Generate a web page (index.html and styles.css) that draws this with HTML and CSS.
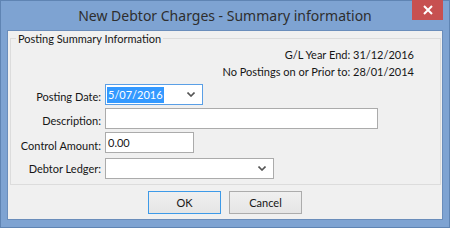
FILE: index.html
```html
<!DOCTYPE html>
<html>
<head>
<meta charset="utf-8">
<link rel="stylesheet" href="styles.css">
</head>
<body>
<div class="window">
  <div class="titlebar">
    <div class="title">New Debtor Charges - Summary information</div>
    <div class="close"><svg width="10" height="10" viewBox="0 0 10 10"><path d="M1 1L9 9M9 1L1 9" stroke="#fff" stroke-width="2" fill="none"/></svg></div>
  </div>
  <div class="client">
    <fieldset class="group">
      <legend class="legend">Posting Summary Information</legend>
      <div class="info">G/L Year End: 31/12/2016</div>
      <div class="info">No Postings on or Prior to: 28/01/2014</div>
      <div class="form">
        <label class="label">Posting Date:</label>
        <div class="field combo focus w-date"><span class="sel">5/07/2016</span><svg class="chev" width="8" height="5" viewBox="0 0 8 5"><path d="M0.5 0.5L4 4L7.5 0.5" stroke="#555" stroke-width="1.6" fill="none"/></svg></div>
        <label class="label">Description:</label>
        <div class="field w-desc"></div>
        <label class="label">Control Amount:</label>
        <div class="field w-ctrl">0.00</div>
        <label class="label">Debtor Ledger:</label>
        <div class="field combo w-ledger"><span></span><svg class="chev" width="8" height="5" viewBox="0 0 8 5"><path d="M0.5 0.5L4 4L7.5 0.5" stroke="#555" stroke-width="1.6" fill="none"/></svg></div>
      </div>
    </fieldset>
    <div class="buttons">
      <button class="btn default">OK</button>
      <button class="btn">Cancel</button>
    </div>
  </div>
</div>
</body>
</html>
```
FILE: styles.css
```css
html, body {
  margin: 0;
  padding: 0;
}
body {
  width: 450px;
  height: 228px;
  overflow: hidden;
  font-family: Lato, "Noto Sans", sans-serif;
  font-size: 11px;
  color: #161616;
}
.window {
  box-sizing: border-box;
  width: 450px;
  height: 228px;
  border: 1px solid #5f84b3;
  background: #7ea3d2;
  padding: 0 6px 7px 6px;
  display: flex;
  flex-direction: column;
  position: relative;
}
.titlebar {
  height: 29px;
  display: flex;
  align-items: center;
  justify-content: center;
}
.title {
  font-family: "Noto Sans", sans-serif;
  font-size: 14px;
  color: #2e2e2e;
  margin-top: 0px;
}
.close {
  position: absolute;
  top: -1px;
  right: 6px;
  width: 31px;
  height: 20px;
  background: #c75050;
  display: flex;
  align-items: center;
  justify-content: center;
}
.client {
  flex: 1;
  border: 1px solid #6a8dbb;
  background: #f0f0f0;
  display: flex;
  flex-direction: column;
}
.group {
  margin: 0 1px 0 2px;
  padding: 0 0 5px 0;
  border: 1px solid #dcdcdc;
  min-width: 0;
}
.legend {
  margin-left: 5px;
  padding: 0 2px;
  line-height: 15px;
}
.info {
  text-align: right;
  line-height: 17px;
  padding-right: 26px;
}
.form {
  display: grid;
  grid-template-columns: 90px auto;
  column-gap: 4px;
  margin-top: 4px;
  align-items: center;
}
.label {
  text-align: right;
  white-space: nowrap;
}
.field {
  box-sizing: border-box;
  height: 21px;
  border: 1px solid #ababab;
  background: #fff;
  padding: 0 2px;
  line-height: 19px;
  display: flex;
  align-items: center;
  margin-bottom: 3px;
}
.form .field:nth-of-type(3) {
  margin-bottom: 5px;
}
.form .field:last-child {
  margin-bottom: 0;
}
.combo {
  justify-content: space-between;
}
.chev {
  margin-right: 5px;
}
.focus {
  border-color: #5a9fe6;
}
.sel {
  background: #3399ff;
  color: #fff;
  line-height: 16px;
  padding: 0 1px;
  margin-left: -1px;
}
.w-date { width: 98px; }
.w-desc { width: 273px; }
.w-ctrl { width: 89px; }
.w-ledger { width: 169px; }
.buttons {
  display: flex;
  justify-content: center;
  gap: 8px;
  padding-top: 6px;
}
.btn {
  box-sizing: border-box;
  width: 73px;
  height: 23px;
  border: 1px solid #acacac;
  background: linear-gradient(#f0f0f0, #e5e5e5);
  font-family: Lato, "Noto Sans", sans-serif;
  font-size: 11px;
  color: #161616;
  padding: 0;
  margin: 0;
}
.btn.default {
  border-color: #3d9ae8;
}
```
